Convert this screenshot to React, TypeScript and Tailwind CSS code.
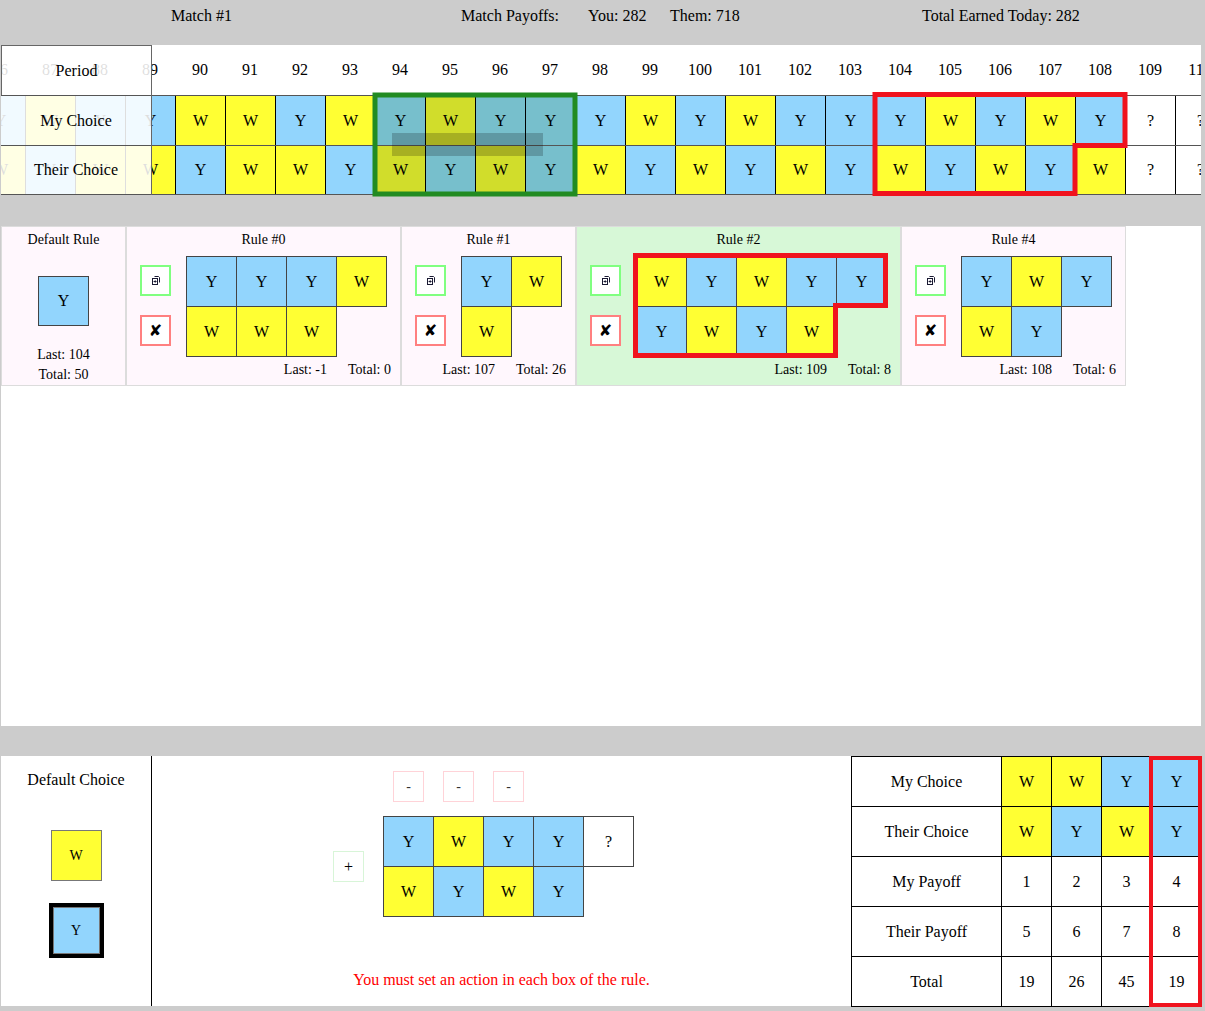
import React from "react";

type V = "Y" | "W" | "?";

const my: Record<number, V> = {
  86: "Y", 87: "W", 88: "Y", 89: "Y", 90: "W", 91: "W", 92: "Y", 93: "W", 94: "Y", 95: "W", 96: "Y", 97: "Y",
  98: "Y", 99: "W", 100: "Y", 101: "W", 102: "Y", 103: "Y", 104: "Y", 105: "W", 106: "Y", 107: "W", 108: "Y",
  109: "?", 110: "?",
};
const their: Record<number, V> = {
  86: "W", 87: "Y", 88: "W", 89: "W", 90: "Y", 91: "W", 92: "W", 93: "Y", 94: "W", 95: "Y", 96: "W", 97: "Y",
  98: "W", 99: "Y", 100: "W", 101: "Y", 102: "W", 103: "Y", 104: "W", 105: "Y", 106: "W", 107: "Y", 108: "W",
  109: "?", 110: "?",
};
const periods = Array.from({ length: 25 }, (_, i) => 86 + i);

function bgOf(v: V, hl = false) {
  if (v === "Y") return hl ? "bg-[#77bfcc]" : "bg-[#92d5fd]";
  if (v === "W") return hl ? "bg-[#d1dd2b]" : "bg-[#ffff33]";
  return "bg-white";
}

function TopRow({ data, last }: { data: Record<number, V>; last?: boolean }) {
  return (
    <div className={`flex h-[50px] border-t border-[#555] ${last ? "border-b" : ""}`}>
      {periods.map((p) => (
        <div
          key={p}
          className={`flex h-full w-[50px] shrink-0 items-center justify-center border-l border-black ${bgOf(
            data[p],
            p >= 94 && p <= 97
          )}`}
        >
          {data[p]}
        </div>
      ))}
    </div>
  );
}

function TopGrid() {
  return (
    <div className="relative h-[150px] w-[1200px]">
      <div className="h-[150px] w-[1200px] overflow-hidden bg-white">
        <div className="ml-[-26px] flex w-max flex-col">
          <div className="flex h-[50px]">
            {periods.map((p) => (
              <div key={p} className="flex h-full w-[50px] shrink-0 items-center justify-center">
                {p}
              </div>
            ))}
          </div>
          <TopRow data={my} />
          <TopRow data={their} last />
        </div>
      </div>
      {/* frozen label column */}
      <div className="absolute left-0 top-0 flex w-[151px] flex-col border-r border-[#666]">
        <div className="flex h-[50px] items-center justify-center border-l border-t border-[#666] bg-white/[0.87]">
          Period
        </div>
        <div className="flex h-[50px] items-center justify-center border-t border-[#555] bg-white/[0.87]">
          My Choice
        </div>
        <div className="flex h-[50px] items-center justify-center border-b border-t border-[#555] bg-white/[0.87]">
          Their Choice
        </div>
      </div>
      {/* drag selection bar */}
      <div className="pointer-events-none absolute left-[391px] top-[88px] h-[23px] w-[151px] bg-black/20" />
      {/* highlight outlines */}
      <svg className="pointer-events-none absolute left-0 top-0" width="1200" height="152" fill="none">
        <rect x="374" y="50" width="200" height="99" stroke="#228b22" strokeWidth="5" />
        <path d="M874 49.5 H1124 V100.5 H1074 V148.5 H874 Z" stroke="#f0131e" strokeWidth="5" />
      </svg>
    </div>
  );
}

function RCell({ v, i }: { v: V; i: number }) {
  return (
    <div
      className={`flex h-[51px] w-[51px] shrink-0 items-center justify-center border border-[#444] ${
        i > 0 ? "ml-[-1px]" : ""
      } ${bgOf(v)}`}
    >
      {v}
    </div>
  );
}

function CellGrid({ top, bottom }: { top: V[]; bottom: V[] }) {
  return (
    <div className="flex flex-col">
      <div className="flex">
        {top.map((v, i) => (
          <RCell key={i} v={v} i={i} />
        ))}
      </div>
      <div className="mt-[-1px] flex">
        {bottom.map((v, i) => (
          <RCell key={i} v={v} i={i} />
        ))}
      </div>
    </div>
  );
}

function DocIcon() {
  return (
    <svg width="10" height="11" viewBox="0 0 10 11" fill="none" stroke="#1a1a33" strokeWidth="1">
      <path d="M3.5 1.5 H7.5 L8.5 2.5 V7.5" />
      <rect x="1.5" y="3.5" width="5" height="6" fill="white" />
      <path d="M2.6 6.5 H5 M4 5.3 L5.2 6.5 L4 7.7" />
    </svg>
  );
}

function RulePanel({
  title,
  width,
  top,
  bottom,
  last,
  total,
  green,
  children,
}: {
  title: string;
  width: string;
  top: V[];
  bottom: V[];
  last: string;
  total: string;
  green?: boolean;
  children?: React.ReactNode;
}) {
  return (
    <div
      className={`relative flex h-[160px] shrink-0 flex-col border border-[#dcdcdc] ${width} ${
        green ? "bg-[#d7f8d7]" : "bg-[#fff7fd]"
      }`}
    >
      <div className="pt-[5px] text-center text-[14px] leading-[16px]">{title}</div>
      <div className="mt-[8px] flex pl-[13px]">
        <div className="flex flex-col pt-[9px]">
          <div className="flex h-[31px] w-[31px] items-center justify-center border-2 border-[#80ff80] bg-white">
            <DocIcon />
          </div>
          <div className="mt-[19px] flex h-[31px] w-[31px] items-center justify-center border-2 border-[#ff8080] bg-white font-['DejaVu_Sans'] text-[16px] font-bold leading-none">
            ✘
          </div>
        </div>
        <div className="ml-[15px]">
          <CellGrid top={top} bottom={bottom} />
        </div>
      </div>
      <div className="mt-[5px] flex justify-end gap-[21px] pr-[9px] text-[14px] leading-[16px]">
        <span>Last: {last}</span>
        <span>Total: {total}</span>
      </div>
      {children}
    </div>
  );
}

function Rules() {
  return (
    <div className="flex h-[500px] w-[1200px] items-start bg-white">
      <div className="flex h-[160px] w-[125px] shrink-0 flex-col items-center border border-[#dcdcdc] bg-[#fff7fd]">
        <div className="pt-[5px] text-center text-[14px] leading-[16px]">Default Rule</div>
        <div className="mt-[28px] flex h-[51px] w-[51px] items-center justify-center border border-[#444] bg-[#92d5fd]">
          Y
        </div>
        <div className="mt-[19px] text-[14px] leading-[20px]">Last: 104</div>
        <div className="text-[14px] leading-[20px]">Total: 50</div>
      </div>
      <RulePanel title="Rule #0" width="w-[275px]" top={["Y", "Y", "Y", "W"]} bottom={["W", "W", "W"]} last="-1" total="0" />
      <RulePanel title="Rule #1" width="w-[175px]" top={["Y", "W"]} bottom={["W"]} last="107" total="26" />
      <RulePanel
        title="Rule #2"
        width="w-[325px]"
        top={["W", "Y", "W", "Y", "Y"]}
        bottom={["Y", "W", "Y", "W"]}
        last="109"
        total="8"
        green
      >
        <svg className="pointer-events-none absolute left-0 top-0" width="323" height="158" fill="none">
          <path d="M58.5 28.5 H308.5 V78.5 H258.5 V128.5 H58.5 Z" stroke="#f0131e" strokeWidth="5" />
        </svg>
      </RulePanel>
      <RulePanel title="Rule #4" width="w-[225px]" top={["Y", "W", "Y"]} bottom={["W", "Y"]} last="108" total="6" />
    </div>
  );
}

function Bottom() {
  const rows: { label: string; vals: string[]; colored?: boolean }[] = [
    { label: "My Choice", vals: ["W", "W", "Y", "Y"], colored: true },
    { label: "Their Choice", vals: ["W", "Y", "W", "Y"], colored: true },
    { label: "My Payoff", vals: ["1", "2", "3", "4"] },
    { label: "Their Payoff", vals: ["5", "6", "7", "8"] },
    { label: "Total", vals: ["19", "26", "45", "19"] },
  ];
  return (
    <div className="flex h-[250px] w-[1200px] bg-white">
      {/* default choice */}
      <div className="flex w-[151px] shrink-0 flex-col items-center border-r border-black pt-[15px]">
        <div className="text-[16px] leading-[18px]">Default Choice</div>
        <div className="mt-[41px] flex h-[51px] w-[51px] items-center justify-center border border-[#777] bg-[#ffff33] text-[14px]">
          W
        </div>
        <div className="mt-[22px] border-4 border-black">
          <div className="flex h-[47px] w-[47px] items-center justify-center border border-[#777] bg-[#92d5fd] text-[14px]">
            Y
          </div>
        </div>
      </div>
      {/* rule editor */}
      <div className="flex w-[699px] shrink-0 flex-col pt-[15px]">
        <div className="flex gap-[19px] pl-[241px]">
          {[0, 1, 2].map((i) => (
            <div
              key={i}
              className="flex h-[31px] w-[31px] items-center justify-center border border-[#ffd3d8] text-[14px] text-[#333]"
            >
              -
            </div>
          ))}
        </div>
        <div className="mt-[14px] flex items-center pl-[181px]">
          <div className="flex h-[31px] w-[31px] items-center justify-center border border-[#d8f5d8] text-[16px]">
            +
          </div>
          <div className="ml-[19px]">
            <CellGrid top={["Y", "W", "Y", "Y", "?"]} bottom={["W", "Y", "W", "Y"]} />
          </div>
        </div>
        <div className="mt-[54px] text-center text-[16px] leading-[18px] text-[#f00]">
          You must set an action in each box of the rule.
        </div>
      </div>
      {/* payoff table */}
      <div className="relative flex flex-col">
        {rows.map((r, ri) => (
          <div key={r.label} className={`flex ${ri > 0 ? "mt-[-1px]" : ""}`}>
            <div className="flex h-[51px] w-[151px] shrink-0 items-center justify-center border border-black">
              {r.label}
            </div>
            {r.vals.map((v, i) => (
              <div
                key={i}
                className={`ml-[-1px] flex h-[51px] w-[51px] shrink-0 items-center justify-center border border-black ${
                  r.colored ? bgOf(v as V) : "bg-white"
                }`}
              >
                {v}
              </div>
            ))}
          </div>
        ))}
        <div className="pointer-events-none absolute left-[298px] top-0 h-[251px] w-[53px] border-4 border-[#f0131e]" />
      </div>
    </div>
  );
}

export default function App() {
  return (
    <div className="min-h-[1011px] w-full bg-[#cccccc] font-['Liberation_Serif',serif] text-[16px] text-black">
      <div className="flex h-[45px] pt-[7px] leading-[18px]">
        <span className="w-[461px] shrink-0 pl-[171px]">Match #1</span>
        <span className="w-[127px] shrink-0">Match Payoffs:</span>
        <span className="w-[82px] shrink-0">You: 282</span>
        <span className="w-[252px] shrink-0">Them: 718</span>
        <span>Total Earned Today: 282</span>
      </div>
      <div className="ml-px">
        <TopGrid />
      </div>
      <div className="ml-px mt-[31px]">
        <Rules />
      </div>
      <div className="ml-px mt-[30px]">
        <Bottom />
      </div>
    </div>
  );
}
